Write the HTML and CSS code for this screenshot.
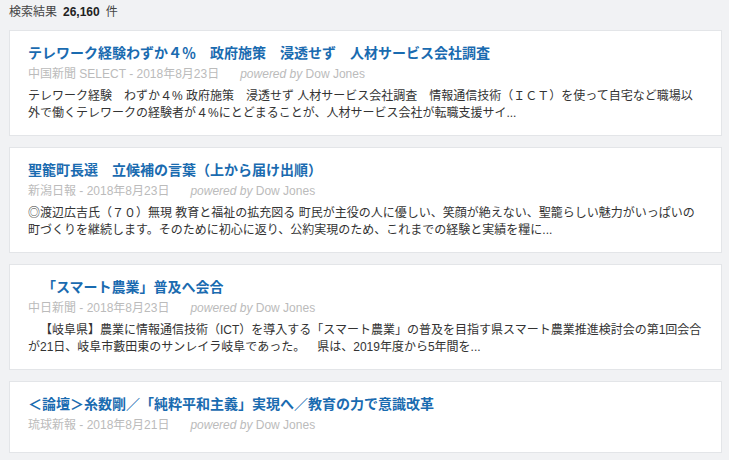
FILE: index.html
```html
<!DOCTYPE html>
<html>
  <head>
    <title>検索結果</title>
    <meta charset="UTF-8"/>
    <link rel="stylesheet" href="styles.css">
  </head>
  <body>
    <div class="count">検索結果<strong>26,160</strong>件</div>

    <div class="results">
      <div class="item">
        <a class="title" href="#">テレワーク経験わずか４％　政府施策　浸透せず　人材サービス会社調査</a>
        <div class="meta">中国新聞 SELECT - 2018年8月23日<span class="powered"><em>powered by</em> Dow Jones</span></div>
        <p class="snippet">テレワーク経験　わずか４% 政府施策　浸透せず 人材サービス会社調査　情報通信技術（ＩＣＴ）を使って自宅など職場以外で働くテレワークの経験者が４%にとどまることが、人材サービス会社が転職支援サイ...</p>
      </div>

      <div class="item">
        <a class="title" href="#">聖籠町長選　立候補の言葉（上から届け出順）</a>
        <div class="meta">新潟日報 - 2018年8月23日<span class="powered"><em>powered by</em> Dow Jones</span></div>
        <p class="snippet">◎渡辺広吉氏（７０）無現 教育と福祉の拡充図る 町民が主役の人に優しい、笑顔が絶えない、聖籠らしい魅力がいっぱいの町づくりを継続します。そのために初心に返り、公約実現のため、これまでの経験と実績を糧に...</p>
      </div>

      <div class="item">
        <a class="title" href="#"><span class="ja">　</span>「スマート農業」普及へ会合</a>
        <div class="meta">中日新聞 - 2018年8月23日<span class="powered"><em>powered by</em> Dow Jones</span></div>
        <p class="snippet"><span class="ja">　</span>【岐阜県】農業に情報通信技術（ICT）を導入する「スマート農業」の普及を目指す県スマート農業推進検討会の第1回会合が21日、岐阜市藪田東のサンレイラ岐阜であった。<span class="ja">　</span>県は、2019年度から5年間を...</p>
      </div>

      <div class="item">
        <a class="title" href="#">＜論壇＞糸数剛／「純粋平和主義」実現へ／教育の力で意識改革</a>
        <div class="meta">琉球新報 - 2018年8月21日<span class="powered"><em>powered by</em> Dow Jones</span></div>
        <p class="snippet"></p>
      </div>
    </div>
  </body>
</html>
```

FILE: styles.css
```css
body {
  margin: 0;
  padding: 3px 7px 10px 9px;
  background: #F1F2F4;
  font-family: 'Liberation Sans', 'Noto Sans CJK JP', sans-serif;
  font-size: 12px;
  color: #333;
  text-spacing-trim: space-all;
}
.ja {
  font-family: 'Noto Sans CJK JP', sans-serif;
  line-height: 0;
}
.count {
  line-height: 18px;
  margin-bottom: 9px;
  color: #444;
}
.count strong {
  margin: 0 6px;
  color: #222;
}
.results {
  display: flex;
  flex-direction: column;
  gap: 11px;
}
.item {
  background: white;
  border: 1px solid #E3E5E8;
  padding: 12px 18px 13px 18px;
}
.title {
  display: block;
  font-size: 14px;
  font-weight: bold;
  line-height: 20px;
  color: #1A6BB0;
  text-decoration: none;
}
.meta {
  margin: 2px 0 5px;
  line-height: 18px;
  color: #BBBBBB;
}
.powered {
  margin-left: 21px;
}
.snippet {
  margin: 0;
  line-height: 17px;
  color: #333;
}
```
